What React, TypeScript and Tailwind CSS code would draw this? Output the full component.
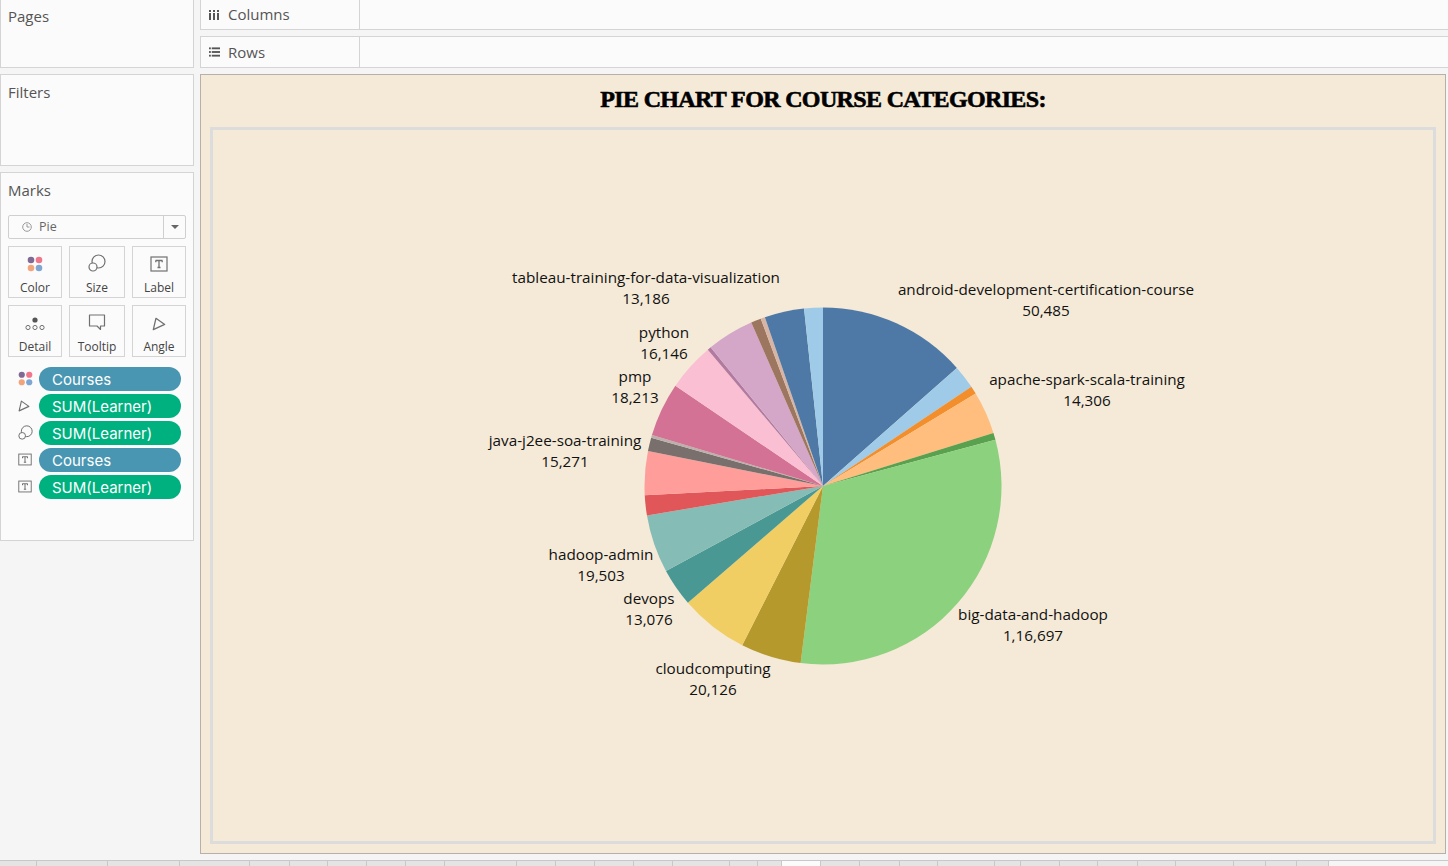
import React from 'react';

// angle (deg, clockwise from 12 o'clock) where each slice ends
const slices = [
  { end: 48.6, color: '#4e79a7' },
  { end: 56.2, color: '#a0cbe8' },
  { end: 58.8, color: '#f28e2b' },
  { end: 72.7, color: '#ffbe7d' },
  { end: 75, color: '#59a14f' },
  { end: 187.2, color: '#8cd17d' },
  { end: 206.9, color: '#b6992d' },
  { end: 229.2, color: '#f1ce63' },
  { end: 241.6, color: '#499894' },
  { end: 260.5, color: '#86bcb6' },
  { end: 267, color: '#e15759' },
  { end: 281.3, color: '#ff9d9a' },
  { end: 285.7, color: '#79706e' },
  { end: 286.6, color: '#bab0ac' },
  { end: 304.2, color: '#d37295' },
  { end: 319.8, color: '#fabfd2' },
  { end: 321, color: '#b07aa1' },
  { end: 336.3, color: '#d4a6c8' },
  { end: 339.6, color: '#9d7660' },
  { end: 341, color: '#d7b5a6' },
  { end: 353.9, color: '#4e79a7' },
  { end: 360, color: '#a0cbe8' },
];

const R = 178.5;

const point = (deg: number) => {
  const a = (deg * Math.PI) / 180;
  return `${(R + R * Math.sin(a)).toFixed(2)} ${(R - R * Math.cos(a)).toFixed(2)}`;
};

const PieChart = () => {
  let start = 0;
  return (
    <svg width="358" height="358" viewBox="-0.5 -0.5 358 358">
      {slices.map((s, i) => {
        const d = `M${R} ${R} L${point(start)} A${R} ${R} 0 ${s.end - start > 180 ? 1 : 0} 1 ${point(s.end)} Z`;
        start = s.end;
        return <path key={i} d={d} fill={s.color} />;
      })}
    </svg>
  );
};

const ColorIcon = ({ size = 16 }: { size?: number }) => (
  <svg width={size} height={size} viewBox="0 0 16 16">
    <circle cx="4" cy="4" r="3.3" fill="#7e6a94" />
    <circle cx="12" cy="4" r="3.3" fill="#f0768c" />
    <circle cx="4" cy="12" r="3.3" fill="#f2a57c" />
    <circle cx="12" cy="12" r="3.3" fill="#7fa6d2" />
  </svg>
);

const SizeIcon = ({ size = 18 }: { size?: number }) => (
  <svg width={size} height={size} viewBox="0 0 18 18" fill="none" stroke="#707070" strokeWidth="1.2">
    <circle cx="10.5" cy="7.5" r="6.5" />
    <circle cx="5" cy="13" r="4" fill="#fbfbfb" />
  </svg>
);

const LabelIcon = ({ w = 18, h = 16 }: { w?: number; h?: number }) => (
  <svg width={w} height={h} viewBox="0 0 18 16" fill="none">
    <rect x="1" y="1" width="16" height="14" stroke="#707070" strokeWidth="1.2" />
    <path d="M5.500 4.500h7M9 4.500v7M7.500 11.500h3M5.800 4.500v1.800M12.200 4.500v1.800" stroke="#707070" strokeWidth="1.300" />
  </svg>
);

const AngleIcon = ({ size = 14 }: { size?: number }) => (
  <svg width={size} height={size} viewBox="0 0 16 16" fill="none" stroke="#707070" strokeWidth="1.5">
    <path d="M4.500 1.500 L14.500 8.500 L1.500 14.500 Z" strokeLinejoin="round" />
  </svg>
);

const DetailIcon = () => (
  <svg width="20" height="14" viewBox="0 0 20 14" fill="none">
    <circle cx="10" cy="3" r="2.600" fill="#555" />
    <circle cx="3" cy="10.500" r="2.100" stroke="#707070" />
    <circle cx="10" cy="10.500" r="2.100" stroke="#707070" />
    <circle cx="17" cy="10.500" r="2.100" stroke="#707070" />
  </svg>
);

const TooltipIcon = () => (
  <svg width="18" height="17" viewBox="0 0 18 17" fill="none" stroke="#707070" strokeWidth="1.2">
    <path d="M1.500 1h15v11h-4v3.500l-3.500-3.500h-7.500z" strokeLinejoin="round" />
  </svg>
);

const MarkCard = ({ icon, label, width }: { icon: React.ReactNode; label: string; width: string }) => (
  <div className={`${width} h-[52px] border border-[#d4d4d4] flex flex-col items-center`}>
    <div className="h-[25px] flex items-end justify-center">{icon}</div>
    <span className="mt-[9px] text-[12px] leading-[14px] text-[#444]">{label}</span>
  </div>
);

const Pill = ({ icon, label, green }: { icon: React.ReactNode; label: string; green?: boolean }) => (
  <div className="flex items-center h-[24px]">
    <div className="w-[31px] pl-[10px] flex items-center">{icon}</div>
    <div className={`${green ? 'bg-[#00b180]' : 'bg-[#4996b2]'} w-[142px] h-[24px] rounded-full pl-[13px] text-[15px] leading-[25px] text-white font-['Inter',sans-serif]`}>
      {label}
    </div>
  </div>
);

const ShelfRow = ({ icon, label, height }: { icon: React.ReactNode; label: string; height: string }) => (
  <div className={`${height} bg-[#fbfbfb] border-b border-t border-l border-[#d4d4d4] flex`}>
    <div className="w-[159px] border-r border-[#d4d4d4] flex items-center pl-[8px] gap-[8px] text-[15px] text-[#555]">
      <div className="w-[11px] flex">{icon}</div>
      <span>{label}</span>
    </div>
  </div>
);

const labels = [
  { name: 'tableau-training-for-data-visualization', value: '13,186', pos: 'left-[433px] top-[137px]' },
  { name: 'android-development-certification-course', value: '50,485', pos: 'left-[833px] top-[149px]' },
  { name: 'apache-spark-scala-training', value: '14,306', pos: 'left-[874px] top-[239px]' },
  { name: 'python', value: '16,146', pos: 'left-[451px] top-[192px]' },
  { name: 'pmp', value: '18,213', pos: 'left-[422px] top-[236px]' },
  { name: 'java-j2ee-soa-training', value: '15,271', pos: 'left-[352px] top-[300px]' },
  { name: 'hadoop-admin', value: '19,503', pos: 'left-[388px] top-[414px]' },
  { name: 'devops', value: '13,076', pos: 'left-[436px] top-[458px]' },
  { name: 'cloudcomputing', value: '20,126', pos: 'left-[500px] top-[528px]' },
  { name: 'big-data-and-hadoop', value: '1,16,697', pos: 'left-[820px] top-[474px]' },
];

const tabWidths = [37, 71, 72, 70, 40, 38, 39, 39, 39, 72, 39, 39, 39, 39, 57, 28, 24, 39, 39, 40, 38, 57, 26, 39, 38, 40, 38, 58, 32, 31, 32];

const App = () => {
  return (
    <div className="w-[1448px] h-[866px] overflow-hidden bg-[#f5f5f5] font-['Open_Sans',sans-serif] flex flex-col">
      <div className="h-[860px] flex gap-[6px]">
        {/* Left cards */}
        <div className="w-[194px] flex flex-col gap-[6px] text-[15px] text-[#555]">
          <div className="h-[68px] bg-[#fbfbfb] border border-t-0 border-[#d4d4d4] pl-[7px] pt-[5px]">Pages</div>
          <div className="h-[92px] bg-[#fbfbfb] border border-[#d4d4d4] pl-[7px] pt-[6px]">Filters</div>
          <div className="h-[369px] bg-[#fbfbfb] border border-[#d4d4d4] pl-[7px] pr-[7px] pt-[6px]">
            <div>Marks</div>
            <div className="mt-[13px] h-[24px] border border-[#cfcfcf] rounded-[2px] flex items-center">
              <div className="flex-1 flex items-center pl-[13px] pt-[1px] gap-[7px] text-[12.5px] text-[#666]">
                <svg width="10" height="10" viewBox="0 0 10 10" fill="none" stroke="#999">
                  <circle cx="5" cy="5" r="4.300" />
                  <path d="M5 2v3h2.500" />
                </svg>
                Pie
              </div>
              <div className="w-[22px] h-full border-l border-[#cfcfcf] flex items-center justify-center">
                <div className="w-0 h-0 border-l-[4px] border-r-[4px] border-t-[4px] border-l-transparent border-r-transparent border-t-[#666]" />
              </div>
            </div>
            <div className="mt-[7px] flex justify-between">
              <MarkCard icon={<ColorIcon />} label="Color" width="w-[54px]" />
              <MarkCard icon={<SizeIcon />} label="Size" width="w-[56px]" />
              <MarkCard icon={<LabelIcon />} label="Label" width="w-[54px]" />
            </div>
            <div className="mt-[7px] flex justify-between">
              <MarkCard icon={<DetailIcon />} label="Detail" width="w-[54px]" />
              <MarkCard icon={<TooltipIcon />} label="Tooltip" width="w-[56px]" />
              <MarkCard icon={<AngleIcon />} label="Angle" width="w-[54px]" />
            </div>
            <div className="mt-[10px] flex flex-col gap-[3px]">
              <Pill icon={<ColorIcon size={15} />} label="Courses" />
              <Pill icon={<AngleIcon size={12} />} label="SUM(Learner)" green />
              <Pill icon={<SizeIcon size={15} />} label="SUM(Learner)" green />
              <Pill icon={<LabelIcon w={14} h={13} />} label="Courses" />
              <Pill icon={<LabelIcon w={14} h={13} />} label="SUM(Learner)" green />
            </div>
          </div>
        </div>

        {/* Right side */}
        <div className="flex-1 flex flex-col">
          <ShelfRow
            height="h-[30px] border-t-0"
            label="Columns"
            icon={
              <svg width="11" height="10" viewBox="0 0 11 10" fill="#555">
                <rect x="0" y="0" width="2" height="2" />
                <rect x="4" y="0" width="2" height="2" />
                <rect x="8" y="0" width="2" height="2" />
                <rect x="0" y="3" width="2" height="7" />
                <rect x="4" y="3" width="2" height="7" />
                <rect x="8" y="3" width="2" height="7" />
              </svg>
            }
          />
          <div className="mt-[6px]">
            <ShelfRow
              height="h-[32px]"
              label="Rows"
              icon={
                <svg width="12" height="10" viewBox="0 0 12 10" fill="#555">
                  <rect x="0" y="0" width="2" height="2" />
                  <rect x="0" y="4" width="2" height="2" />
                  <rect x="0" y="8" width="2" height="2" />
                  <rect x="3" y="0" width="9" height="2" />
                  <rect x="3" y="4" width="9" height="2" />
                  <rect x="3" y="8" width="9" height="2" />
                </svg>
              }
            />
          </div>
          {/* Viz */}
          <div className="mt-[6px] w-[1246px] h-[780px] bg-[#f5ead8] border border-[#b5b0a8] px-[9px] pb-[9px] flex flex-col">
            <div className="h-[52px] pt-[9px] text-center text-[24px] tracking-[-0.65px] leading-[30px] font-bold text-black [-webkit-text-stroke:0.6px_black] font-['Liberation_Serif',serif]">
              PIE CHART FOR COURSE CATEGORIES:
            </div>
            <div className="relative flex-1 border-[3px] border-[#dcdcdc] flex items-center justify-center">
              <PieChart />
              {labels.map((l) => (
                <div
                  key={l.name}
                  className={`absolute ${l.pos} -translate-x-1/2 text-center whitespace-nowrap text-[15.25px] leading-[21px] text-[#111]`}
                >
                  <div>{l.name}</div>
                  <div>{l.value}</div>
                </div>
              ))}
            </div>
          </div>
        </div>
      </div>

      {/* Sheet tabs */}
      <div className="h-[6px] border-t border-[#c8c8c8] flex">
        {tabWidths.map((w, i) => (
          <div
            key={i}
            style={{ width: w }}
            className={`border-r border-[#c8c8c8] ${i === 17 ? 'bg-[#fbfbfb]' : 'bg-[#e4e4e4]'}`}
          />
        ))}
      </div>
    </div>
  );
};

export default App;
